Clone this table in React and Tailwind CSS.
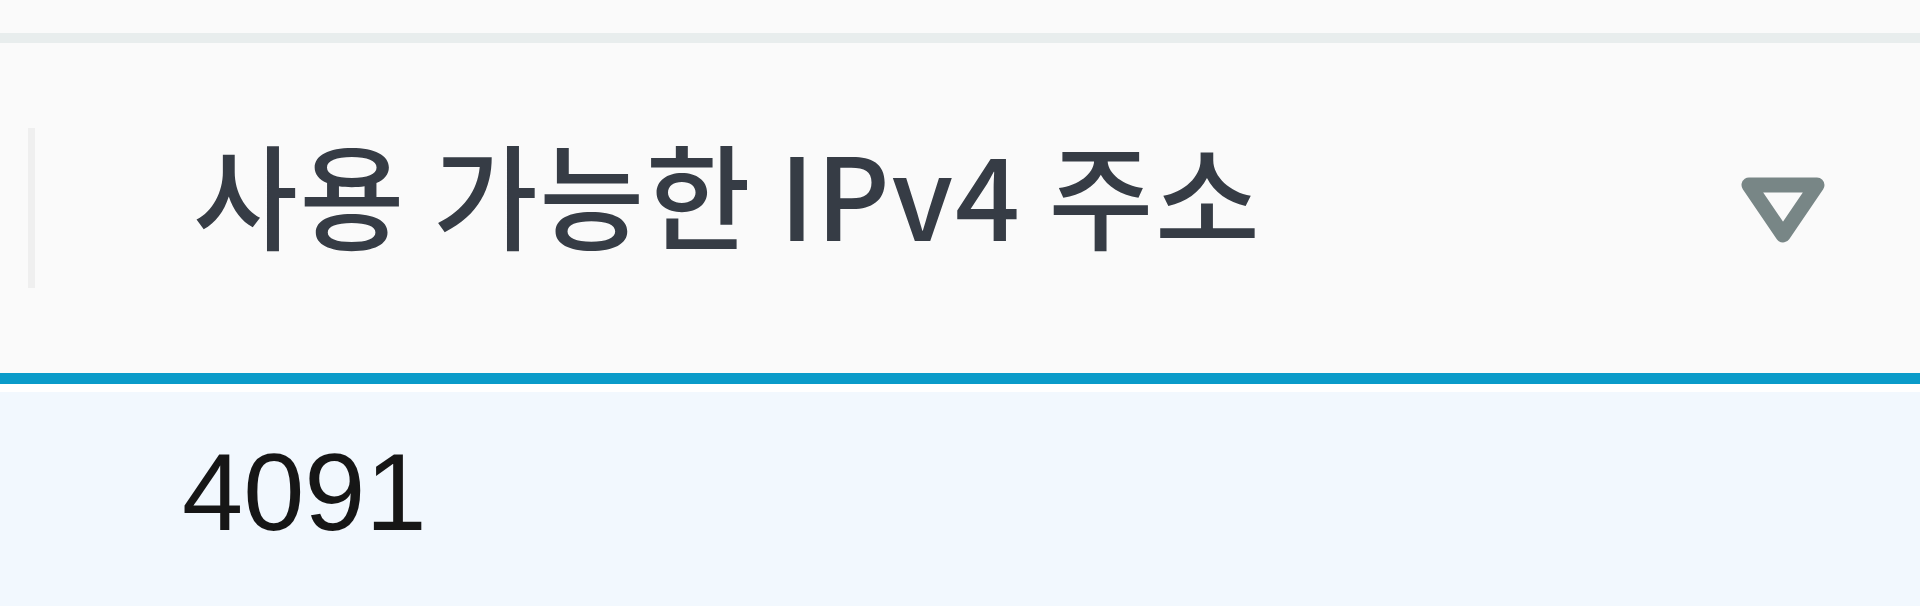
import React from "react";

function SortTriangle() {
  return (
    <svg width="84" height="66" viewBox="0 0 84 66" className="shrink-0">
      <polygon
        points="8,8 76,8 42,58"
        fill="none"
        stroke="#788686"
        strokeWidth="15"
        strokeLinejoin="round"
      />
    </svg>
  );
}

export default function App() {
  return (
    <div className="flex h-[606px] w-full flex-col overflow-hidden bg-[#fafafa]">
      <div className="h-[33px] shrink-0" />
      <div className="h-[10px] shrink-0 bg-[#e8eded]" />

      <div className="flex h-[330px] shrink-0 items-center">
        <div className="ml-[28px] h-[160px] w-[7px] shrink-0 bg-[#efefef]" />
        <div
          className="ml-[158px] flex-1 self-start pt-[92px] text-[114px] font-medium leading-none tracking-[1.5px] text-[#363c45] whitespace-nowrap"
          style={{ fontFamily: '"Noto Sans CJK KR", "Noto Sans", sans-serif' }}
        >
          사용 가능한 IPv4 주소
        </div>
        <div className="mr-[95px] mt-[4px]">
          <SortTriangle />
        </div>
      </div>

      <div className="h-[11px] shrink-0 bg-[#0a9bc9]" />
      <div className="h-[8px] shrink-0 bg-white" />

      <div className="flex-1 bg-[#f2f8fe] pl-[182px] pt-[45px]">
        <div
          className="text-[110px] leading-none text-[#161616]"
          style={{ fontFamily: '"Liberation Sans", Arial, sans-serif' }}
        >
          4091
        </div>
      </div>
    </div>
  );
}
